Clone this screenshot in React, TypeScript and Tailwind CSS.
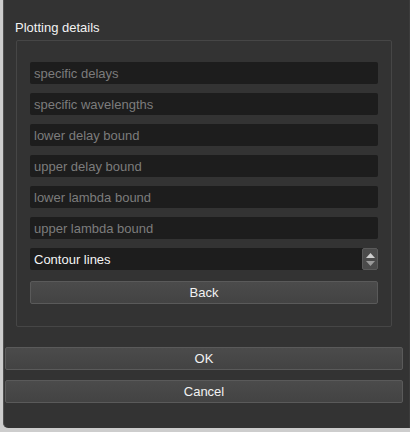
import React from "react";

const font = { fontFamily: '"Liberation Sans", Arial, sans-serif' };

function Field({ text }: { text: string }) {
  return (
    <div className="h-[22px] w-full rounded-[2px] bg-[#1d1d1d] pl-[4px] flex items-center text-[13px] text-[#7c7c7c] leading-none">
      {text}
    </div>
  );
}

function Btn({ text, h = "h-[23px]" }: { text: string; h?: string }) {
  return (
    <div
      className={`${h} w-full rounded-[2px] border border-[#5a5a5a] bg-gradient-to-b from-[#4b4b4b] to-[#434343] flex items-center justify-center text-[13px] text-[#f2f2f2] leading-none`}
    >
      {text}
    </div>
  );
}

export default function App() {
  return (
    <div className="w-[410px] h-[432px] bg-[#cdcdcd] flex" style={font}>
      <div className="ml-[3px] w-[407px] h-[428px] bg-[#333333] border-l border-[#505050] border-r border-r-[#3c3c3c] rounded-bl-[5px] flex flex-col">
        <div className="pl-[11px] pr-[17px] pt-[21px]">
          <div className="text-[13px] text-[#f2f2f2] leading-none h-[19px]">Plotting details</div>
          <div className="ml-[1px] h-[287px] border border-[#464646] rounded-[2px] px-[13px] pt-[21px] flex flex-col gap-[9px]">
            <Field text="specific delays" />
            <Field text="specific wavelengths" />
            <Field text="lower delay bound" />
            <Field text="upper delay bound" />
            <Field text="lower lambda bound" />
            <Field text="upper lambda bound" />
            <div className="h-[22px] w-full rounded-[2px] bg-[#1d1d1d] flex items-center">
              <div className="flex-1 pl-[4px] text-[13px] text-[#f4f4f4] leading-none">Contour lines</div>
              <div className="w-[16px] h-[22px] rounded-[2px] border border-[#5a5a5a] bg-[#4b4b4b] flex flex-col items-center justify-center gap-[3px]">
                <svg width="9" height="5" viewBox="0 0 9 5"><polygon points="4.5,0 9,5 0,5" fill="#cfcfcf" /></svg>
                <svg width="9" height="5" viewBox="0 0 9 5"><polygon points="0,0 9,0 4.5,5" fill="#9a9a9a" /></svg>
              </div>
            </div>
            <div className="mt-[2px]">
              <Btn text="Back" h="h-[23px]" />
            </div>
          </div>
        </div>
        <div className="pl-[1px] pr-[6px] pt-[20px] flex flex-col gap-[10px]">
          <Btn text="OK" />
          <Btn text="Cancel" />
        </div>
      </div>
    </div>
  );
}
